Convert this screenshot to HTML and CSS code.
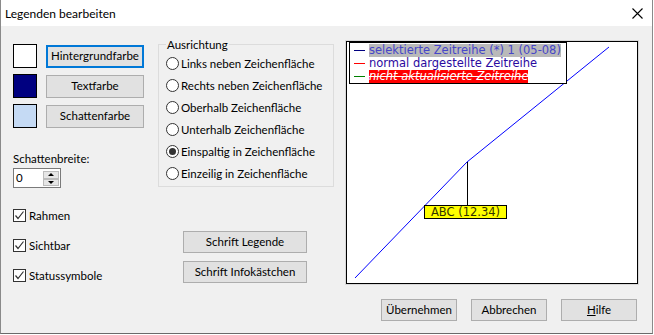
FILE: index.html
```html
<!DOCTYPE html>
<html lang="de">
<head>
    <meta charset="UTF-8">
    <meta name="viewport" content="width=device-width, initial-scale=1.0">
    <title>Legenden bearbeiten</title>
    <link rel="stylesheet" href="styles.css">
</head>
<body>
    <div class="window">
        <div class="titlebar">
            <span class="title">Legenden bearbeiten</span>
            <svg class="close" width="11" height="11" viewBox="0 0 11 11">
                <path d="M0.5 0.5 L10.5 10.5 M10.5 0.5 L0.5 10.5" stroke="#000" stroke-width="1.1" fill="none"/>
            </svg>
        </div>
        <div class="content">
            <div class="col-left">
                <div class="color-row">
                    <span class="swatch swatch-white"></span>
                    <button class="btn btn-color focused">Hintergrundfarbe</button>
                </div>
                <div class="color-row">
                    <span class="swatch swatch-navy"></span>
                    <button class="btn btn-color">Textfarbe</button>
                </div>
                <div class="color-row">
                    <span class="swatch swatch-light"></span>
                    <button class="btn btn-color">Schattenfarbe</button>
                </div>

                <div class="spin-label">Schattenbreite:</div>
                <div class="spin">
                    <span class="spin-value">0</span>
                    <span class="spin-buttons">
                        <span class="spin-btn"><span class="arrow-up"></span></span>
                        <span class="spin-btn"><span class="arrow-down"></span></span>
                    </span>
                </div>

                <div class="checks">
                    <label class="check-row"><span class="check"><svg width="11" height="11" viewBox="0 0 11 11"><path d="M1.5 5.5 L4 8.5 L9.5 1.5" stroke="#333" stroke-width="1.2" fill="none"/></svg></span>Rahmen</label>
                    <label class="check-row"><span class="check"><svg width="11" height="11" viewBox="0 0 11 11"><path d="M1.5 5.5 L4 8.5 L9.5 1.5" stroke="#333" stroke-width="1.2" fill="none"/></svg></span>Sichtbar</label>
                    <label class="check-row"><span class="check"><svg width="11" height="11" viewBox="0 0 11 11"><path d="M1.5 5.5 L4 8.5 L9.5 1.5" stroke="#333" stroke-width="1.2" fill="none"/></svg></span>Statussymbole</label>
                </div>
            </div>

            <div class="col-middle">
                <fieldset class="group">
                    <legend>Ausrichtung</legend>
                    <label class="radio-row"><span class="radio"></span>Links neben Zeichenfläche</label>
                    <label class="radio-row"><span class="radio"></span>Rechts neben Zeichenfläche</label>
                    <label class="radio-row"><span class="radio"></span>Oberhalb Zeichenfläche</label>
                    <label class="radio-row"><span class="radio"></span>Unterhalb Zeichenfläche</label>
                    <label class="radio-row"><span class="radio checked"></span>Einspaltig in Zeichenfläche</label>
                    <label class="radio-row"><span class="radio"></span>Einzeilig in Zeichenfläche</label>
                </fieldset>
                <div class="font-buttons">
                    <button class="btn btn-font">Schrift Legende</button>
                    <button class="btn btn-font">Schrift Infokästchen</button>
                </div>
            </div>

            <div class="col-right">
                <div class="preview">
                    <svg class="chart" width="290" height="241" viewBox="0 0 290 241">
                        <polyline points="8,236 120,120 262,5" stroke="#0000ff" stroke-width="1" fill="none"/>
                        <line x1="120.5" y1="120" x2="120.5" y2="163" stroke="#000" stroke-width="1"/>
                    </svg>
                    <div class="legend">
                        <div class="legend-row"><span class="legend-line line-navy"></span><span class="legend-text sel">selektierte Zeitreihe (*) 1 (05-08)</span></div>
                        <div class="legend-row"><span class="legend-line line-red"></span><span class="legend-text normal">normal dargestellte Zeitreihe</span></div>
                        <div class="legend-row"><span class="legend-line line-green"></span><span class="legend-text stale">nicht aktualisierte Zeitreihe</span></div>
                    </div>
                    <div class="infobox">ABC (12.34)</div>
                </div>
                <div class="dialog-buttons">
                    <button class="btn btn-dialog">Übernehmen</button>
                    <button class="btn btn-dialog">Abbrechen</button>
                    <button class="btn btn-dialog"><span class="accel">H</span>ilfe</button>
                </div>
            </div>
        </div>
    </div>
</body>
</html>
```

FILE: styles.css
```css
body {
    margin: 0;
    padding: 0;
    background: #fff;
    font-family: Lato, "Liberation Sans", Arial, sans-serif;
    font-size: 11.5px;
    color: #000;
}
.window {
    width: 653px;
    height: 334px;
    border-left: 1px solid #8a8a8a;
    border-right: 1px solid #8a8a8a;
    border-bottom: 1px solid #6a6a6a;
    box-sizing: border-box;
    background: #f0f0f0;
    display: flex;
    flex-direction: column;
}
.titlebar {
    height: 26px;
    background: #fff;
    display: flex;
    align-items: center;
    justify-content: space-between;
    padding: 0 9px 0 4px;
    flex-shrink: 0;
}
.title {
    font-size: 12px;
    margin-top: 1px;
}
.close {
    margin-top: 1px;
}
.content {
    display: flex;
    align-items: flex-start;
    padding: 11px 0 0 12px;
}
.btn {
    font-family: Lato, "Liberation Sans", Arial, sans-serif;
    font-size: 11.5px;
    color: #000;
    background: #e1e1e1;
    border: 1px solid #adadad;
    padding: 0;
    margin: 0;
    box-sizing: border-box;
    line-height: 1;
    white-space: nowrap;
    cursor: pointer;
}
.btn.focused {
    border: 2px solid #0078d7;
}
.accel {
    text-decoration: underline;
}

/* linke Spalte */
.col-left {
    width: 132px;
    margin-top: 7px;
    display: flex;
    flex-direction: column;
}
.color-row {
    display: flex;
    align-items: center;
    gap: 9px;
    height: 24px;
    margin-bottom: 6px;
}
.swatch {
    width: 24px;
    height: 24px;
    border: 1px solid #000;
    box-sizing: border-box;
}
.swatch-white { background: #fff; }
.swatch-navy { background: #000080; }
.swatch-light { background: #c5daf4; }
.btn-color {
    width: 98px;
    height: 23px;
}
.spin-label {
    margin-top: 17px;
    line-height: 16px;
}
.spin {
    margin-top: 1px;
    width: 48px;
    height: 20px;
    border: 1px solid #7a7a7a;
    box-sizing: border-box;
    background: #fff;
    display: flex;
    justify-content: space-between;
}
.spin-value {
    padding-left: 2px;
    line-height: 18px;
}
.spin-buttons {
    display: flex;
    flex-direction: column;
    padding: 2px 1px 1px 0;
}
.spin-btn {
    width: 14px;
    height: 7px;
    background: #e6e6e6;
    border: 1px solid #bcbcbc;
    display: flex;
    align-items: center;
    justify-content: center;
}
.arrow-up {
    border-left: 3px solid transparent;
    border-right: 3px solid transparent;
    border-bottom: 3px solid #000;
}
.arrow-down {
    border-left: 3px solid transparent;
    border-right: 3px solid transparent;
    border-top: 3px solid #000;
}
.checks {
    margin-top: 19px;
    display: flex;
    flex-direction: column;
    gap: 14px;
}
.check-row {
    display: flex;
    align-items: center;
    gap: 3px;
    height: 16px;
    white-space: nowrap;
}
.check {
    width: 13px;
    height: 13px;
    border: 1px solid #333;
    box-sizing: border-box;
    background: #fff;
    display: flex;
    align-items: center;
    justify-content: center;
}

/* mittlere Spalte */
.col-middle {
    width: 176px;
    margin-left: 13px;
    display: flex;
    flex-direction: column;
}
.group {
    margin: 0;
    padding: 0 6px 2px 7px;
    border: 1px solid #dcdcdc;
    min-width: 0;
}
.group legend {
    padding: 0 1px;
    line-height: 15px;
}
.radio-row {
    display: flex;
    align-items: center;
    gap: 2px;
    height: 22px;
    white-space: nowrap;
}
.radio {
    width: 13px;
    height: 13px;
    border: 1px solid #333;
    border-radius: 50%;
    box-sizing: border-box;
    background: #fff;
    display: flex;
    align-items: center;
    justify-content: center;
    flex-shrink: 0;
}
.radio.checked::after {
    content: "";
    width: 7px;
    height: 7px;
    border-radius: 50%;
    background: #333;
}
.font-buttons {
    margin: 44px 0 0 25px;
    display: flex;
    flex-direction: column;
    gap: 8px;
}
.btn-font {
    width: 124px;
    height: 22px;
}

/* rechte Spalte */
.col-right {
    width: 292px;
    margin-left: 12px;
    margin-top: 4px;
    display: flex;
    flex-direction: column;
}
.preview {
    position: relative;
    width: 292px;
    height: 243px;
    border: 1px solid #000;
    box-sizing: border-box;
    background: #fff;
    box-shadow: 0 0 0 1px #d8d8d8;
}
.chart {
    display: block;
}
.legend {
    position: absolute;
    left: 2px;
    top: 0;
    width: 218px;
    height: 42px;
    box-sizing: border-box;
    border: 1px solid #000;
    background: #fff;
    padding: 1px 0 0 4px;
    font-family: "DejaVu Sans", Verdana, sans-serif;
    font-size: 11.5px;
}
.legend-row {
    display: flex;
    align-items: center;
    height: 13px;
}
.legend-line {
    width: 11px;
    height: 1px;
    margin-right: 4px;
    flex-shrink: 0;
}
.line-navy { background: #000080; }
.line-red { background: #ff0000; }
.line-green { background: #008000; }
.legend-text {
    line-height: 13px;
    white-space: nowrap;
}
.sel {
    background: #b9b9b9;
    color: #4646c8;
}
.normal {
    color: #2a0aa0;
}
.stale {
    background: #ff0000;
    color: #fff;
    font-style: italic;
    text-decoration: line-through;
}
.infobox {
    position: absolute;
    left: 77px;
    top: 163px;
    width: 83px;
    height: 14px;
    box-sizing: border-box;
    border: 1px solid #000;
    background: #ffff00;
    font-family: "DejaVu Sans", Verdana, sans-serif;
    font-size: 11.5px;
    line-height: 12px;
    text-align: center;
    color: #333300;
}
.dialog-buttons {
    margin-top: 15px;
    margin-right: 1px;
    display: flex;
    justify-content: flex-end;
    gap: 14px;
}
.btn-dialog {
    width: 76px;
    height: 22px;
}
```
